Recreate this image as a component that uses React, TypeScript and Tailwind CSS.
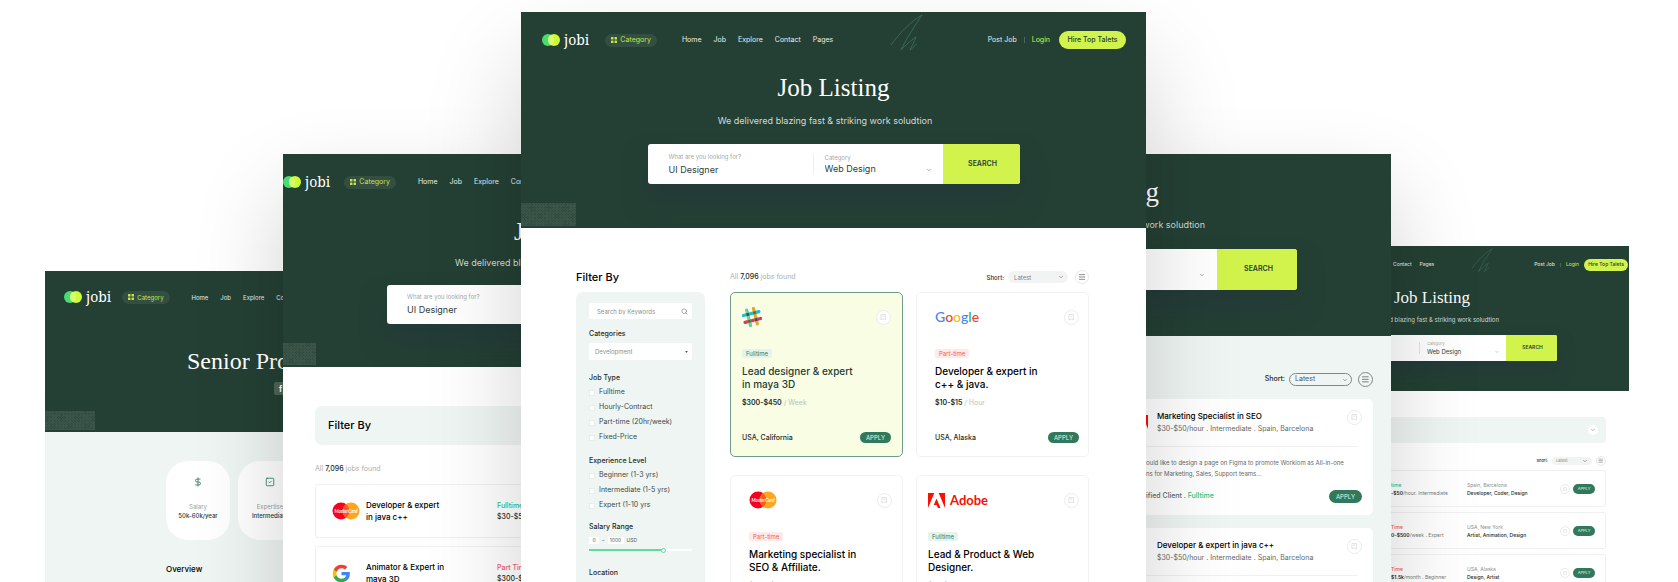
import type { ReactNode } from "react";
import { ChevronDown, Menu, Search, SquareCheck, DollarSign } from "lucide-react";

const serif = "font-['Liberation_Serif',serif]";

function Logo() {
  return (
    <a href="#" className="flex items-center gap-1 text-white">
      <svg viewBox="0 0 18 12" className="h-3 w-[18px]" aria-hidden="true">
        <circle cx="6" cy="6" r="6" fill="#47dd71" />
        <circle cx="12" cy="6" r="6" fill="#cdfb35" />
        <path d="M9 .8a6 6 0 0 1 0 10.4a6 6 0 0 1 0-10.4" fill="#d9fb73" />
      </svg>
      <span className="font-['Noto_Serif','Liberation_Serif',serif] text-sm leading-3">jobi</span>
    </a>
  );
}

function CategoryPill({ textClass }: { textClass: string }) {
  return (
    <button className={`flex h-[13px] items-center gap-[3px] rounded-full bg-[#344e42] px-[6px] text-[#c3e648] ${textClass}`}>
      <svg viewBox="0 0 6 6" className="size-[6px]" fill="currentColor" aria-hidden="true">
        <rect width="2.5" height="2.5" rx=".6" />
        <rect x="3.5" width="2.5" height="2.5" rx=".6" />
        <rect y="3.5" width="2.5" height="2.5" rx=".6" />
        <rect x="3.5" y="3.5" width="2.5" height="2.5" rx=".6" />
      </svg>
      Category
    </button>
  );
}

function NavLinks({ textClass }: { textClass: string }) {
  return (
    <nav className={`flex gap-3 text-[#e8eeeb] ${textClass}`}>
      {["Home", "Job", "Explore", "Contact", "Pages"].map((l) => (
        <a key={l} href="#">{l}</a>
      ))}
    </nav>
  );
}

function Pattern({ className }: { className: string }) {
  return (
    <div
      className={`absolute bottom-[2px] left-0 bg-[#2f493e] bg-[repeating-linear-gradient(45deg,#3a5448_0_1px,transparent_1px_2px),repeating-linear-gradient(-45deg,#3a5448_0_1px,transparent_1px_2px)] ${className}`}
    />
  );
}

function Scribble({ className }: { className: string }) {
  return (
    <svg viewBox="0 0 33 38" className={className} fill="none" stroke="#42705b" strokeWidth=".8" aria-hidden="true">
      <path d="M1 31C9 20 20 8 32 1C25 12 17 23 11 36C16 31 20 27 26 23C24 28 22 32 20 36C23 34 24 32 27 30" />
    </svg>
  );
}

function Bookmark({ className }: { className: string }) {
  return (
    <button aria-label="Save job" className={`flex shrink-0 items-center justify-center rounded-full border border-[#e9ecec] bg-white text-[#cfd5d4] ${className}`}>
      <svg viewBox="0 0 12 14" className="h-1/2 w-1/2" fill="none" stroke="currentColor" strokeWidth="1.4" aria-hidden="true">
        <path d="M1 13V1h10v12l-2.500-2h-5zM3.500 4.500h5" />
      </svg>
    </button>
  );
}

function Slack() {
  return (
    <svg viewBox="0 0 20 20" className="size-5" strokeWidth="3.200" strokeLinecap="round" aria-label="Slack">
      <g transform="rotate(-14 10 10)">
        <path d="M2 6.500H18" stroke="#1fbfd0" />
        <path d="M2 13.500H18" stroke="#e8315f" />
        <path d="M6.500 2V18" stroke="#6ecaa4" />
        <path d="M13.500 2V18" stroke="#e3a62f" />
        <path d="M6.500 6.400v.2M13.500 13.400v.2" stroke="#2f5a4c" strokeLinecap="square" strokeWidth="2.800" />
        <path d="M13.500 6.400v.2M6.500 13.400v.2" stroke="#71652f" strokeLinecap="square" strokeWidth="2.800" />
      </g>
    </svg>
  );
}

function Mastercard() {
  return (
    <svg viewBox="0 0 28 18" className="h-[18px] w-7" aria-label="MasterCard">
      <circle cx="9" cy="9" r="8.500" fill="#f7001d" />
      <circle cx="19" cy="9" r="8.500" fill="#ffa51f" />
      <path d="M14 2.200a8.500 8.500 0 0 1 0 13.600a8.500 8.500 0 0 1 0-13.600" fill="#fb5a1e" />
      <text x="14" y="10.600" textAnchor="middle" fontSize="4.600" fontWeight="700" fontStyle="italic" fill="#fff" className="font-['Lato',sans-serif]">MasterCard</text>
    </svg>
  );
}

function GoogleG() {
  return (
    <svg viewBox="0 0 24 24" className="size-[19px]" aria-label="Google">
      <path fill="#4285F4" d="M22.560 12.250c0-.78-.07-1.530-.2-2.250H12v4.260h5.920a5.060 5.060 0 0 1-2.200 3.320v2.770h3.570c2.080-1.920 3.270-4.740 3.270-8.100z" />
      <path fill="#34A853" d="M12 23c2.970 0 5.460-.98 7.280-2.660l-3.570-2.770c-.98.66-2.230 1.060-3.710 1.060-2.860 0-5.290-1.930-6.160-4.530H2.180v2.840A11 11 0 0 0 12 23z" />
      <path fill="#FBBC05" d="M5.840 14.090a6.600 6.600 0 0 1 0-4.180V7.070H2.180a11 11 0 0 0 0 9.860z" />
      <path fill="#EA4335" d="M12 5.380c1.620 0 3.060.56 4.210 1.640l3.150-3.150C17.450 2.090 14.970 1 12 1A11 11 0 0 0 2.180 7.070l3.660 2.840C6.710 7.310 9.140 5.380 12 5.380z" />
    </svg>
  );
}

function GoogleWord() {
  return (
    <span aria-label="Google" className="font-['Lato',sans-serif] text-sm leading-5 font-medium">
      <span className="text-[#4285f4]">G</span>
      <span className="text-[#ea4335]">o</span>
      <span className="text-[#fbbc05]">o</span>
      <span className="text-[#4285f4]">g</span>
      <span className="text-[#34a853]">l</span>
      <span className="text-[#ea4335]">e</span>
    </span>
  );
}

function AdobeMark({ className }: { className: string }) {
  return (
    <svg viewBox="0 0 17 15" className={className} fill="#fa0f00" aria-hidden="true">
      <path d="M0 0h6.300L0 15zM10.700 0H17v15zM8.500 5.500L12.500 15H9.900L8.700 12H5.800z" />
    </svg>
  );
}

function Apply({ className }: { className: string }) {
  return <button className={`shrink-0 rounded-full bg-[#31795a] text-[#e6f2ec] ${className}`}>APPLY</button>;
}

function SortBar({ selectClass, menuClass, textClass }: { selectClass: string; menuClass: string; textClass: string }) {
  return (
    <div className={`flex items-center ${textClass}`}>
      <label className="flex items-center gap-1">
        <span className="font-medium text-[#1d2b26]">Short:</span>
        <span className="relative flex items-center">
          <select className={`appearance-none rounded-full outline-none ${selectClass}`}>
            <option>Latest</option>
          </select>
          <ChevronDown className="pointer-events-none absolute right-1 size-[6px] text-[#555]" />
        </span>
      </label>
      <button aria-label="List view" className={`flex items-center justify-center rounded-full border text-[#4f5856] ${menuClass}`}>
        <Menu className="size-2/3" />
      </button>
    </div>
  );
}

const kinds = {
  full: "bg-[#e4f4ec] text-[#31795a]",
  part: "bg-[#ffe9e9] text-[#f4595d]",
};

type Job = {
  logo: ReactNode;
  kind: "full" | "part";
  title: [string, string];
  pay: string;
  per: string;
  place: string;
  frame: string;
  color: string;
};

const jobs: Job[] = [
  { logo: <Slack />, kind: "full", title: ["Lead designer & expert", "in maya 3D"], pay: "$300-$450", per: "Week", place: "USA, California", frame: "border-[#6f9c89] bg-[#f8fde3] pl-[11px] pr-[11px]", color: "text-[#244034]" },
  { logo: <GoogleWord />, kind: "part", title: ["Developer & expert in", "c++ & java."], pay: "$10-$15", per: "Hour", place: "USA, Alaska", frame: "border-[#f1f2f2] bg-white pl-[18px] pr-[9px]", color: "text-black" },
  { logo: <Mastercard />, kind: "part", title: ["Marketing specialist in", "SEO & Affiliate."], pay: "$250-$300", per: "Week", place: "USA, Alaska", frame: "border-[#f1f2f2] bg-white pl-[18px] pr-[10px]", color: "text-black" },
  {
    logo: (
      <span className="flex items-center gap-[5px] font-['Lato',sans-serif] text-[13px] leading-4 font-bold text-[#fa0f00]">
        <AdobeMark className="h-[15px] w-[17px]" />
        Adobe
      </span>
    ),
    kind: "full", title: ["Lead & Product & Web", "Designer."], pay: "$10-$15", per: "Hour", place: "USA, Alaska", frame: "border-[#f1f2f2] bg-white pl-[11px] pr-[9px]", color: "text-black",
  },
];

function JobCard({ job }: { job: Job }) {
  return (
    <article className={`flex h-[165px] flex-col rounded-[5px] border pt-[14px] ${job.frame}`}>
      <div className="flex h-5 items-center justify-between">
        {job.logo}
        <Bookmark className="size-[15px]" />
      </div>
      <span className={`mt-[22px] self-start rounded-xs px-1 text-[6px] leading-[9px] ${kinds[job.kind]}`}>
        {job.kind === "full" ? "Fulltime" : "Part-time"}
      </span>
      <h3 className={`mt-[7px] text-[10px] leading-[13px] font-medium ${job.color}`}>
        {job.title[0]}
        <br />
        {job.title[1]}
      </h3>
      <p className="mt-[7px] text-[7px] leading-[10px] text-[#b9bfbd]">
        <b className="font-semibold text-[#1d2b26]">{job.pay}</b> / {job.per}
      </p>
      <div className="mt-6 flex items-center justify-between text-[7px] leading-[11px] text-[#1d2b26]">
        <span className="font-medium">{job.place}</span>
        <Apply className="w-[31px] text-[6px] leading-[11px]" />
      </div>
    </article>
  );
}

function CheckGroup({ title, items, className }: { title: string; items: string[]; className: string }) {
  return (
    <fieldset className={className}>
      <legend className="text-[7px] leading-[10px] font-medium text-[#1d2b26]">{title}</legend>
      <div className="mt-[2px] text-[7px] text-[#3d4946]">
        {items.map((t) => (
          <label key={t} className="flex h-[15px] items-center gap-1">
            <input type="checkbox" className="size-[6px] appearance-none rounded-none border border-[#e9eeec] bg-white" />
            {t}
          </label>
        ))}
      </div>
    </fieldset>
  );
}

function Filters() {
  return (
    <aside className="w-[129px] shrink-0">
      <h2 className="text-[11px] leading-[14px] font-medium text-black">Filter By</h2>
      <div className="mt-2 h-[320px] rounded-t-[7px] bg-[#eff5f3] px-[13px] pt-[11px]">
        <label className="flex h-4 items-center rounded-xs bg-white pr-1 pl-2">
          <input aria-label="Search by Keywords" placeholder="Search by Keywords" className="min-w-0 flex-1 text-[6px] outline-none placeholder:text-[#8b9391]" />
          <Search className="size-[7px] text-[#6d7573]" />
        </label>
        <label className="block">
          <span className="mt-[10px] block text-[7px] leading-[10px] font-medium text-[#1d2b26]">Categories</span>
          <span className="relative mt-1 flex items-center">
            <select className="h-[17px] w-full appearance-none rounded-xs bg-white px-[6px] text-[6px] text-[#8b9391] outline-none">
              <option>Development</option>
            </select>
            <svg viewBox="0 0 4 3" className="pointer-events-none absolute right-1 h-[2px] w-[3px]" aria-hidden="true">
              <path d="M0 0h4L2 3z" fill="#555" />
            </svg>
          </span>
        </label>
        <CheckGroup className="mt-[13px]" title="Job Type" items={["Fulltime", "Hourly-Contract", "Part-time (20hr/week)", "Fixed-Price"]} />
        <CheckGroup className="mt-[11px]" title="Experience Level" items={["Beginner (1-3 yrs)", "Intermediate (1-5 yrs)", "Expert (1-10 yrs"]} />
        <h3 className="mt-[9px] text-[7px] leading-[10px] font-medium text-[#1d2b26]">Salary Range</h3>
        <div className="mt-[5px] flex items-center gap-[3px] text-[5px] leading-[7px] text-[#4f5856]">
          <input aria-label="Minimum salary" defaultValue="0" className="w-[10px] bg-white text-center" />
          –
          <input aria-label="Maximum salary" defaultValue="1000" className="w-4 bg-white text-center" />
          USD
        </div>
        <input
          type="range"
          aria-label="Salary"
          defaultValue={73}
          className="mt-[5px] block h-[2px] w-full appearance-none bg-[linear-gradient(to_right,#5fdc9c_73%,#fff_73%)] [&::-webkit-slider-thumb]:size-[5px] [&::-webkit-slider-thumb]:appearance-none [&::-webkit-slider-thumb]:rounded-full [&::-webkit-slider-thumb]:border [&::-webkit-slider-thumb]:border-[#5fdc9c] [&::-webkit-slider-thumb]:bg-white"
        />
        <label className="mt-[17px] block text-[7px] leading-[10px] font-medium text-[#1d2b26]">
          Location
          <input aria-label="Location" className="mt-1 block h-4 w-full rounded-xs bg-white" />
        </label>
      </div>
    </aside>
  );
}

function ListingPanel() {
  return (
    <div className="bg-white">
      <header className="relative bg-[#244034] pb-11 pt-[19px]">
        <div className="flex h-[18px] items-center pl-[21px] pr-5">
          <Logo />
          <div className="ml-4 mr-[25px]"><CategoryPill textClass="text-[7px]" /></div>
          <NavLinks textClass="text-[7px]" />
          <Scribble className="absolute left-[369px] top-[2px] h-[38px] w-[33px]" />
          <div className="ml-auto flex items-center text-[7px]">
            <a href="#" className="text-[#e8eeeb]">Post Job</a>
            <span className="mx-[7px] h-[6px] w-px bg-[#4c6459]" />
            <a href="#" className="text-[#d2f34c]">Login</a>
            <button className="ml-[9px] h-[18px] w-[67px] rounded-full bg-[#d2f34c] font-medium text-[#244034]">Hire Top Talets</button>
          </div>
        </div>
        <h1 className={`mt-[23px] text-center text-[25px] leading-8 text-white ${serif}`}>Job Listing</h1>
        <p className="mt-[10px] pr-[17px] text-center text-[9px] leading-[14px] text-[#d3dad7]">We delivered blazing fast &amp; striking work soludtion</p>
        <form className="mx-auto mt-4 flex h-10 w-[372px] overflow-hidden rounded-[3px] bg-white shadow-[0_16px_24px_rgba(35,55,60,0.7)]">
          <label className="flex-1 pl-[21px] pt-2">
            <span className="block text-[6px] leading-[9px] text-[#a3aaa8]">What are you looking for?</span>
            <input defaultValue="UI Designer" className="mt-px block h-[14px] w-full text-[9px] text-[#333b38] outline-none" />
          </label>
          <span className="mt-[10px] h-5 w-px bg-[#eef0f0]" />
          <label className="relative w-[129px] pl-[11px] pt-[9px]">
            <span className="block text-[6px] leading-[9px] text-[#a3aaa8]">Category</span>
            <select className="block h-[14px] w-[110px] appearance-none text-[9px] text-[#333b38] outline-none">
              <option>Web Design</option>
            </select>
            <ChevronDown className="pointer-events-none absolute right-[11px] top-[23px] size-[6px] text-[#555]" />
          </label>
          <button type="button" className="w-[77px] bg-[#d2f34c] pl-[3px] text-[7px] font-semibold text-[#244034]">SEARCH</button>
        </form>
        <Pattern className="h-[23px] w-[55px]" />
      </header>
      <div className="flex gap-[25px] pl-[55px] pr-[57px] pt-[42px]">
        <Filters />
        <main className="min-w-0 flex-1">
          <div className="flex h-[14px] items-center justify-between">
            <p className="text-[7px] text-[#a9b0ae]">All <b className="font-medium text-[#1d2b26]">7,096</b> jobs found</p>
            <SortBar textClass="text-[6px]" selectClass="h-3 w-[60px] bg-[#f2f3f3] px-[6px] text-[#7d8583]" menuClass="ml-[7px] size-[14px] border-[#e6e9e8]" />
          </div>
          <div className="mt-2 grid grid-cols-2 gap-x-[13px] gap-y-[18px]">
            {jobs.map((j) => <JobCard key={j.title[0]} job={j} />)}
          </div>
        </main>
      </div>
    </div>
  );
}

function ProfilePanel() {
  return (
    <div className="overflow-hidden bg-[#eff5f3]">
      <header className="relative bg-[#244034] pb-[37px] pt-5 whitespace-nowrap">
        <div className="flex h-3 items-center pl-[19px]">
          <Logo />
          <div className="ml-[11px] mr-[22px]"><CategoryPill textClass="text-[6px]" /></div>
          <NavLinks textClass="text-[6px]" />
        </div>
        <h2 className={`mt-11 pl-[142px] text-2xl leading-7 text-white ${serif}`}>Senior Product Designer</h2>
        <div className="mt-[7px] pl-[229px]">
          <a href="#" aria-label="Facebook" className="flex size-[13px] items-center justify-center rounded-xs bg-[#4d655a] text-[8px] font-bold text-white">f</a>
        </div>
        <Pattern className="h-[19px] w-[50px]" />
      </header>
      <div className="pl-[121px] pt-[29px]">
        <div className="flex gap-2 text-center text-[7px] leading-[9px]">
          <div className="h-[79px] w-16 shrink-0 rounded-[22px] bg-white pt-4">
            <DollarSign className="mx-auto size-[10px] text-[#31795a]" />
            <p className="mt-[15px] text-[6px] text-[#9aa3a0]">Salary</p>
            <p className="text-[6px] font-medium text-[#244034]">50k-60k/year</p>
          </div>
          <div className="h-[79px] w-16 shrink-0 rounded-[22px] bg-white pt-4">
            <SquareCheck className="mx-auto size-[10px] text-[#31795a]" />
            <p className="mt-[15px] text-[6px] text-[#9aa3a0]">Expertise</p>
            <p className="text-[6px] font-medium text-[#244034]">Intermediate</p>
          </div>
        </div>
        <h3 className="mt-[23px] text-[8px] leading-3 font-medium text-black">Overview</h3>
      </div>
    </div>
  );
}

function ResultRow({ logo, lines, kind, pay, color }: { logo: ReactNode; lines: [string, string]; kind: string; pay: string; color: string }) {
  return (
    <article className="flex h-[54px] w-[400px] items-center rounded-[3px] border border-[#eff1f1] bg-white pl-4">
      <div className="flex w-[34px] items-center">{logo}</div>
      <h3 className="w-[131px] text-[8px] leading-3 font-medium text-black">{lines[0]}<br />{lines[1]}</h3>
      <div className="text-[7px] leading-[11px] font-medium">
        <p className={color}>{kind}</p>
        <p className="text-[#1d2b26]">{pay}</p>
      </div>
    </article>
  );
}

function ResultsPanel() {
  return (
    <div className="overflow-hidden bg-white whitespace-nowrap">
      <header className="relative bg-[#244034] pb-[43px] pt-[22px]">
        <div className="flex h-3 items-center">
          <Logo />
          <div className="ml-[14px] mr-[22px]"><CategoryPill textClass="text-[7px]" /></div>
          <NavLinks textClass="text-[7px]" />
        </div>
        <h2 className={`mt-7 pl-[231px] text-[26px] leading-8 text-white ${serif}`}>Job Listing</h2>
        <p className="mt-2 pl-[172px] text-[9px] leading-[14px] text-[#d3dad7]">We delivered blazing fast &amp; striking work soludtion</p>
        <label className="ml-[104px] mt-[15px] block h-[39px] w-[372px] rounded-[3px] bg-white pl-5 pt-[7px] shadow-[0_16px_24px_rgba(35,55,60,0.7)]">
          <span className="block text-[6px] leading-[9px] text-[#a3aaa8]">What are you looking for?</span>
          <input defaultValue="UI Designer" className="mt-px block h-[14px] w-24 text-[9px] text-[#333b38] outline-none" />
        </label>
        <Pattern className="h-[22px] w-[33px]" />
      </header>
      <div className="pl-8 pt-[39px]">
        <div className="h-[39px] w-[400px] rounded-[7px] bg-[#eff5f3] pl-[13px]">
          <h3 className="text-[11px] leading-[39px] font-medium text-black">Filter By</h3>
        </div>
        <p className="mt-[19px] text-[7px] leading-[10px] text-[#a9b0ae]">All <b className="font-medium text-[#1d2b26]">7,096</b> jobs found</p>
        <div className="mt-[10px] flex flex-col gap-2">
          <ResultRow logo={<Mastercard />} lines={["Developer & expert", "in java c++"]} kind="Fulltime" pay="$30-$50" color="text-[#2bc67d]" />
          <ResultRow logo={<GoogleG />} lines={["Animator & Expert in", "maya 3D"]} kind="Part Time" pay="$300-$500" color="text-[#f4595d]" />
        </div>
      </div>
    </div>
  );
}

function DetailCard({ title, logo }: { title: string; logo: ReactNode }) {
  return (
    <article className="relative h-[116px] rounded-r-[5px] bg-white pl-[11px] pr-[11px] pt-[11px] text-[7px] text-[#5f6b67]">
      <div className="absolute -left-[14px] top-[14px]">{logo}</div>
      <div className="flex justify-between">
        <div>
          <h3 className="text-[8px] leading-3 font-medium text-black">{title}</h3>
          <p className="mt-px leading-3">$30-$50/hour . Intermediate . Spain, Barcelona</p>
        </div>
        <Bookmark className="size-[15px]" />
      </div>
      <hr className="mr-1 mt-[11px] -ml-[11px] border-[#eef1f0]" />
      <p className="-ml-[11px] mt-[10px] text-[6px] leading-[11px]">
        ould like to design a page on Figma to promote Workiom as All-in-one
        <br />
        ns for Marketing, Sales, Support teams...
      </p>
      <div className="-ml-[11px] mt-[11px] flex items-center justify-between">
        <p className="font-medium">ified Client . <span className="text-[#2bc67d]">Fulltime</span></p>
        <Apply className="w-[33px] text-[6px] leading-[13px]" />
      </div>
    </article>
  );
}

function DetailPanel() {
  return (
    <div className="overflow-hidden bg-[#eff5f3] whitespace-nowrap">
      <header className="flex flex-col items-end bg-[#244034] pb-[46px] pt-[22px]">
        <h2 className={`pr-[232px] text-[27px] leading-8 text-white ${serif}`}>Job Listing</h2>
        <p className="mt-[10px] pr-[186px] text-[9px] leading-[14px] text-[#d3dad7]">We delivered blazing fast &amp; striking work soludtion</p>
        <div className="mr-[94px] mt-[17px] flex h-[41px] w-[389px] overflow-hidden rounded-[3px] bg-white shadow-[0_16px_24px_rgba(35,55,60,0.7)]">
          <div className="flex flex-1 justify-end pr-3 pt-[23px]"><ChevronDown className="size-[6px] text-[#555]" /></div>
          <button className="w-20 bg-[#d2f34c] pl-[3px] text-[7px] font-semibold text-[#244034]">SEARCH</button>
        </div>
      </header>
      <div className="pr-[18px] pt-9">
        <div className="flex justify-end">
          <SortBar textClass="text-[7px]" selectClass="h-[13px] w-[63px] border border-[#7b8a84] px-[5px] text-[#4f5856]" menuClass="ml-[6px] size-[15px] border-[#7b8a84]" />
        </div>
        <div className="mt-3 flex flex-col gap-[13px]">
          <DetailCard title="Marketing Specialist in SEO" logo={<AdobeMark className="h-[18px] w-4" />} />
          <DetailCard title="Developer & expert in java c++" logo={null} />
        </div>
      </div>
    </div>
  );
}

const rows = [
  { kind: "time", pay: "-$50", rest: "/hour. Intermediate", place: "Spain, Barcelona", tags: "Developer, Coder, Design", color: "text-[#2bc67d]" },
  { kind: "Time", pay: "0-$500", rest: "/week . Expert", place: "USA, New York", tags: "Artist, Animation, Design", color: "text-[#f4595d]" },
  { kind: "Time", pay: "$1.5k", rest: "/month . Beginner", place: "USA, Alaska", tags: "Design, Artist", color: "text-[#f4595d]" },
];

function CompactPanel() {
  return (
    <div className="overflow-hidden bg-white whitespace-nowrap">
      <header className="relative flex flex-col items-end bg-[#244034] pb-[30px] pt-[13px]">
        <div className="flex h-3 w-full items-center pl-[2px] pr-px text-[5px] text-[#e8eeeb]">
          <a href="#">Contact</a>
          <a href="#" className="ml-2">Pages</a>
          <Scribble className="absolute right-[136px] top-[2px] h-[25px] w-[22px]" />
          <a href="#" className="ml-auto">Post Job</a>
          <span className="mx-[5px] h-1 w-px bg-[#4c6459]" />
          <a href="#" className="text-[#d2f34c]">Login</a>
          <button className="ml-[5px] h-3 w-11 rounded-full bg-[#d2f34c] font-medium text-[#244034]">Hire Top Talets</button>
        </div>
        <h2 className={`mt-[15px] pr-[159px] text-[17px] leading-6 text-white ${serif}`}>Job Listing</h2>
        <p className="mt-[5px] pr-[130px] text-[6px] leading-[10px] text-[#d3dad7]">We delivered blazing fast &amp; striking work soludtion</p>
        <form className="mr-[72px] mt-[10px] flex h-[26px] w-[248px] justify-end overflow-hidden rounded-xs bg-white shadow-[0_10px_16px_rgba(35,55,60,0.7)]">
          <span className="mt-[7px] h-3 w-px bg-[#e3e6e5]" />
          <label className="relative w-[86px] pl-[7px] pt-[6px]">
            <span className="block text-[4px] leading-[6px] text-[#a3aaa8]">Category</span>
            <select className="block h-[9px] w-[70px] appearance-none text-[6px] text-[#333b38] outline-none">
              <option>Web Design</option>
            </select>
            <ChevronDown className="pointer-events-none absolute right-[7px] top-[15px] size-1 text-[#555]" />
          </label>
          <button type="button" className="w-[51px] bg-[#d2f34c] pl-[2px] text-[5px] font-semibold text-[#244034]">SEARCH</button>
        </form>
      </header>
      <div className="pr-[23px] pt-[26px]">
        <div className="flex h-[26px] items-center justify-end rounded-r-[4px] bg-[#eff5f3] pr-2">
          <button aria-label="Expand filters" className="flex size-[10px] items-center justify-center rounded-full bg-white">
            <ChevronDown className="size-[6px] text-[#777]" />
          </button>
        </div>
        <div className="mt-[13px] flex justify-end">
          <SortBar textClass="text-[4px]" selectClass="h-2 w-10 bg-[#f2f3f3] px-1 text-[#7d8583]" menuClass="ml-1 size-[10px] border-[#e6e9e8]" />
        </div>
        <div className="mt-1 flex flex-col gap-[5px]">
          {rows.map((r) => (
            <article key={r.tags} className="flex h-[37px] items-center rounded-r-[3px] border border-l-0 border-[#eff1f1] bg-white pr-[10px] text-[5px] leading-[8px]">
              <div className="w-[76px]">
                <p className={`font-medium ${r.color}`}>{r.kind}</p>
                <p className="text-[#76807d]"><b className="font-semibold text-[#1d2b26]">{r.pay}</b>{r.rest}</p>
              </div>
              <div className="flex-1">
                <p className="text-[#8a9290]">{r.place}</p>
                <p className="font-medium text-[#1d2b26]">{r.tags}</p>
              </div>
              <Bookmark className="size-[10px]" />
              <Apply className="ml-[3px] w-[22px] text-[4px] leading-[10px]" />
            </article>
          ))}
        </div>
      </div>
    </div>
  );
}

export default function App() {
  return (
    <div className="grid h-screen grid-cols-[minmax(0,238fr)_minmax(0,238fr)_minmax(0,625fr)_minmax(0,245fr)_minmax(0,238fr)] overflow-hidden bg-white pl-[45px] pr-[49px] font-['Inter',sans-serif]">
      <section className="z-10 mt-[271px] grid">
        <ProfilePanel />
      </section>
      <section className="z-20 mt-[154px] grid shadow-[0_40px_90px_rgba(0,0,0,0.18)]">
        <ResultsPanel />
      </section>
      <section className="z-30 mt-3 grid shadow-[0_50px_90px_rgba(0,0,0,0.18)]">
        <ListingPanel />
      </section>
      <section className="z-20 mt-[154px] grid shadow-[0_40px_90px_rgba(0,0,0,0.18)]">
        <DetailPanel />
      </section>
      <section className="z-10 mt-[246px] grid">
        <CompactPanel />
      </section>
    </div>
  );
}
